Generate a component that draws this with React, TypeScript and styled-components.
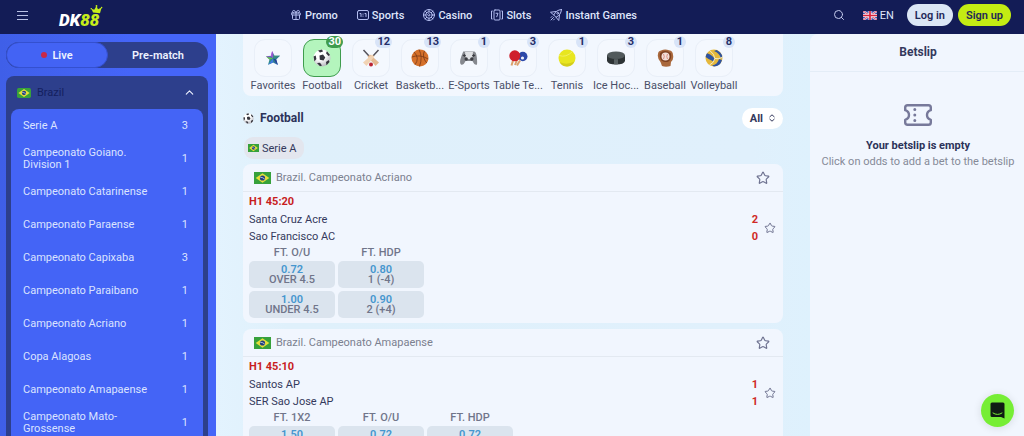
import React, { useState } from "react";
import styled, { createGlobalStyle, css } from "styled-components";
import { ChevronUp, Gift, Search, Star } from "lucide-react";

const GlobalStyle = createGlobalStyle`
  * {
    box-sizing: border-box;
  }

  body {
    margin: 0;
    font-family: Roboto, "Liberation Sans", sans-serif;
    font-size: 11px;
    color: #34395c;
    background: #e0f1fd;
  }

  button, select {
    font: inherit;
    color: inherit;
    border: 0;
    padding: 0;
    background: none;
    cursor: pointer;
  }

  a {
    color: inherit;
    text-decoration: none;
  }

  ul {
    list-style: none;
    margin: 0;
    padding: 0;
  }

  h1, h2, h3, p {
    margin: 0;
  }

  svg {
    display: block;
    flex: none;
  }
`;

const Page = styled.div`
  display: flex;
  flex-direction: column;
  height: 100vh;
  overflow: hidden;
`;

/* ---------- header ---------- */

const Header = styled.header`
  display: flex;
  align-items: center;
  flex: none;
  height: 34px;
  padding: 0 13px 4px 17px;
  background: #131c56;
  color: #dfe5fb;
`;

const HeaderLeft = styled.div`
  display: flex;
  align-items: center;
  gap: 31px;
  flex: none;
  width: 273px;
`;

const LogoLink = styled.a`
  position: relative;
  display: block;
  padding-top: 9px;
  font-size: 17px;
  line-height: 18px;
  font-weight: 900;
  font-style: italic;
  color: #fff;

  span {
    color: #c6ee1b;
  }

  svg {
    position: absolute;
    top: 3px;
    right: -4px;
  }
`;

const Nav = styled.nav`
  display: flex;
  align-items: center;
  gap: 19px;
  flex: 1;
`;

const NavLink = styled.a`
  display: flex;
  align-items: center;
  gap: 3px;
  font-size: 11px;
  font-weight: 500;
  white-space: nowrap;

  svg {
    color: #b3bdf0;
  }
`;

const HeaderRight = styled.div`
  display: flex;
  align-items: center;
  flex: none;
`;

const Language = styled.button`
  display: flex;
  align-items: center;
  gap: 3px;
  margin: 0 13px 0 18px;
  font-size: 11px;
`;

const PillButton = styled.button<{ $primary?: boolean }>`
  height: 22px;
  padding: 0 8px;
  margin-left: ${(p) => (p.$primary ? "5px" : "0")};
  border-radius: 11px;
  font-size: 11px;
  font-weight: 600;
  color: #1f2858;
  background: ${(p) => (p.$primary ? "#c3ec13" : "#dbe6f5")};
`;

/* ---------- layout ---------- */

const Columns = styled.div`
  display: grid;
  grid-template-columns: 216px minmax(0, 1fr) 214px;
  flex: 1;
  min-height: 0;
`;

/* ---------- sidebar ---------- */

const Sidebar = styled.aside`
  padding: 8px 8px 0 6px;
  overflow: hidden;
  background: linear-gradient(90deg, #3f5fe8, #4565f8 60%);
  color: #dbe3ff;
`;

const Tabs = styled.div`
  display: flex;
  height: 26px;
  border-radius: 13px;
  background: #2d3f8c;
`;

const Tab = styled.button<{ $active: boolean }>`
  display: flex;
  align-items: center;
  justify-content: center;
  gap: 5px;
  flex: 1;
  border-radius: 13px;
  font-size: 11px;
  font-weight: 600;
  color: #eef2ff;
  ${(p) =>
    p.$active &&
    css`
      background: #4363f4;
      border: 1px solid #3450cf;
    `}
`;

const LiveDot = styled.i`
  width: 6px;
  height: 6px;
  border-radius: 50%;
  background: #c92848;
`;

const Country = styled.section`
  margin-top: 8px;
  padding: 0 5px;
  border-radius: 8px 8px 0 0;
  background: #2d3f8c;
`;

const CountryHeader = styled.button`
  display: flex;
  align-items: center;
  gap: 6px;
  width: 100%;
  height: 33px;
  padding: 0 7px 0 6px;
  font-size: 11px;
  color: #14205f;

  svg:last-child {
    margin-left: auto;
    color: #eef2ff;
  }
`;

const LeagueList = styled.ul`
  border-radius: 8px 8px 0 0;
  background: #4464f6;
`;

const League = styled.a`
  display: flex;
  align-items: center;
  justify-content: space-between;
  height: 33px;
  padding: 0 15px 0 12px;
  font-size: 11px;
  line-height: 12px;

  span {
    max-width: 130px;
  }
`;

/* ---------- main column ---------- */

const Main = styled.main`
  padding: 0 27px;
  overflow: hidden;
  background: linear-gradient(90deg, #e3f3fe, #dff0fb 12%, #e0f0fc 90%, #def1fd);
`;

const SportsBar = styled.div`
  display: flex;
  gap: 1px;
  padding: 5px 6px 3px;
  border-radius: 0 0 8px 8px;
  background: #f2f7fe;
`;

const SportItem = styled.button`
  display: flex;
  flex-direction: column;
  align-items: center;
  width: 48px;
`;

const SportTile = styled.span<{ $active?: boolean }>`
  position: relative;
  display: flex;
  align-items: center;
  justify-content: center;
  width: 38px;
  height: 38px;
  border-radius: 11px;
  border: 1px solid ${(p) => (p.$active ? "#3f9c4e" : "#e9eff8")};
  background: ${(p) => (p.$active ? "#b4f5bd" : "#f4f8fe")};
`;

const Badge = styled.span<{ $active?: boolean }>`
  position: absolute;
  top: -4px;
  right: -3px;
  min-width: 12px;
  padding: 0 2px;
  border-radius: 6px;
  font-size: 11px;
  line-height: 12px;
  font-weight: 700;
  text-align: center;
  color: ${(p) => (p.$active ? "#fff" : "#262f68")};
  background: ${(p) => (p.$active ? "#3f9c4e" : "#d8e4f8")};
`;

const SportLabel = styled.span`
  margin-top: 2px;
  font-size: 11px;
  line-height: 14px;
  white-space: nowrap;
  color: #4a4f68;
`;

const SectionHead = styled.div`
  display: flex;
  align-items: center;
  gap: 6px;
  height: 22px;
  margin-top: 11px;

  h1 {
    flex: 1;
    font-size: 12px;
    font-weight: 700;
    color: #2c3259;
  }
`;

const FilterPill = styled.button`
  display: flex;
  align-items: center;
  gap: 6px;
  height: 21px;
  padding: 0 8px;
  border-radius: 11px;
  font-size: 11px;
  font-weight: 700;
  background: #fff;
`;

const Chip = styled.button`
  display: flex;
  align-items: center;
  gap: 3px;
  height: 22px;
  margin: 8px 0 5px 1px;
  padding: 0 7px 0 4px;
  border-radius: 9px;
  font-size: 11px;
  background: #e3e6ee;
`;

const Card = styled.article`
  margin-bottom: 6px;
  border-radius: 8px;
  background: #f1f6fe;
`;

const CardHeader = styled.div`
  display: flex;
  align-items: center;
  gap: 5px;
  height: 28px;
  padding: 0 13px 0 11px;
  border-bottom: 1px solid #e3e9f1;

  h2 {
    flex: 1;
    font-size: 11px;
    font-weight: 400;
    color: #7b808f;
  }
`;

const StarButton = styled.button`
  color: #6f7391;
`;

const CardBody = styled.div`
  padding: 1px 7px 5px 6px;
`;

const Clock = styled.p`
  font-size: 11px;
  line-height: 18px;
  font-weight: 700;
  color: #c81e1e;
`;

const Match = styled.div`
  display: flex;
  align-items: center;
  gap: 6px;
`;

const Teams = styled.div`
  flex: 1;
`;

const Team = styled.div`
  display: flex;
  justify-content: space-between;
  font-size: 11px;
  line-height: 17px;

  b {
    color: #cf2a26;
  }
`;

const Markets = styled.div`
  display: flex;
  gap: 3px;
`;

const Market = styled.div`
  display: flex;
  flex-direction: column;
  gap: 3px;
  width: 86px;

  h3 {
    margin-bottom: -3px;
    font-size: 11px;
    line-height: 16px;
    font-weight: 500;
    text-align: center;
    color: #70758a;
  }
`;

const OddButton = styled.button`
  display: flex;
  flex-direction: column;
  align-items: center;
  justify-content: center;
  height: 27px;
  padding-top: 1px;
  border-radius: 5px;
  font-size: 11px;
  line-height: 10px;
  font-weight: 500;
  color: #70758a;
  background: #dbe4ee;

  b {
    font-weight: 600;
    color: #4596cf;
  }
`;

/* ---------- betslip ---------- */

const Betslip = styled.aside`
  border-radius: 8px 0 0 0;
  background: #f1f6fe;
  text-align: center;

  h2 {
    padding-left: 2px;
    font-size: 12px;
    line-height: 37px;
    font-weight: 700;
    border-bottom: 1px solid #e4edf7;
  }
`;

const EmptyState = styled.div`
  display: flex;
  flex-direction: column;
  align-items: center;
  padding: 32px 0 0 2px;
  font-size: 11px;
  line-height: 16px;
  color: #858a98;

  strong {
    margin-top: 12px;
    font-size: 11px;
    font-weight: 700;
    color: #2c3259;
  }
`;

const ChatButton = styled.button`
  position: fixed;
  right: 10px;
  bottom: 9px;
  display: flex;
  align-items: center;
  justify-content: center;
  width: 33px;
  height: 33px;
  border-radius: 50%;
  background: #76ee35;
  box-shadow: 0 1px 8px rgba(0, 0, 0, 0.12);
`;

/* ---------- icons ---------- */

const BrazilFlag = ({ width = 14, height = 10, radius = 0 }) => (
  <svg width={width} height={height} viewBox="0 0 17 12" preserveAspectRatio="none">
    <rect width="17" height="12" rx={radius} fill="#37a13b" />
    <path d="M8.500 1.300 15.300 6 8.500 10.700 1.700 6Z" fill="#e6df3a" />
    <circle cx="8.500" cy="6" r="2.600" fill="#233f7c" />
    <path d="M6.200 5.200q2.500 0 4.500 1.900" stroke="#e8f0f0" strokeWidth=".7" fill="none" />
  </svg>
);

const UkFlag = () => (
  <svg width="14" height="9" viewBox="0 0 14 9">
    <rect width="14" height="9" fill="#3b4fa8" />
    <path d="M0 0 14 9M14 0 0 9" stroke="#f0e6f4" strokeWidth="2" />
    <path d="M0 0 14 9M14 0 0 9" stroke="#d8324a" strokeWidth=".8" />
    <path d="M7 0V9M0 4.500H14" stroke="#f6eef6" strokeWidth="3" />
    <path d="M7 0V9M0 4.500H14" stroke="#d8243c" strokeWidth="1.700" />
  </svg>
);

const Crown = () => (
  <svg width="14" height="9" viewBox="0 0 14 9">
    <path d="M4 7.500 2.500 3.800 5.200 4.800 7.500 1 9 4.200 12.600 2.600 11 8.300Z" fill="#c6ee1b" />
    <circle cx="7.500" cy="1" r=".9" fill="#c6ee1b" />
    <circle cx="2.300" cy="3.800" r=".8" fill="#c6ee1b" />
    <circle cx="12.600" cy="2.600" r=".8" fill="#c6ee1b" />
  </svg>
);

const MenuIcon = () => (
  <svg width="11" height="9" viewBox="0 0 11 9" stroke="#b8c0e4" strokeWidth="1">
    <path d="M0 .5H11M0 4.500H11M0 8.500H11" />
  </svg>
);

const SortIcon = () => (
  <svg width="6" height="8" viewBox="0 0 6 8" fill="none" stroke="currentColor" strokeLinecap="round" strokeLinejoin="round">
    <path d="M.8 2.800 3 .8 5.200 2.800M.8 5.200 3 7.200 5.200 5.200" />
  </svg>
);

const lineIcon = {
  width: 12,
  height: 12,
  viewBox: "0 0 24 24",
  fill: "none",
  stroke: "currentColor",
  strokeWidth: 2,
  strokeLinecap: "round",
  strokeLinejoin: "round",
} as const;

const ScoreIcon = () => (
  <svg {...lineIcon}>
    <rect x="1" y="3" width="22" height="18" rx="3" />
    <path d="M6 9h2v6M12 10v.5M12 14v.5M16 9h2v6" />
  </svg>
);

const ChipIcon = () => (
  <svg {...lineIcon}>
    <circle cx="12" cy="12" r="11" />
    <circle cx="12" cy="12" r="6.500" />
    <path d="M12 1v4.500M12 18.500V23M1 12h4.500M18.500 12H23M4.200 4.200l3.200 3.200M16.600 16.600l3.200 3.200M19.800 4.200l-3.200 3.200M7.400 16.600l-3.200 3.200M12 9.500l2.500 2.500-2.500 2.500L9.500 12Z" />
  </svg>
);

const SlotsIcon = () => (
  <svg {...lineIcon}>
    <rect x="6" y="2" width="12" height="20" rx="2" />
    <path d="M10 8.500h4l-2.500 7M2.500 4H1v16h1.500M21.500 4H23v16h-1.500" />
  </svg>
);

const RocketIcon = () => (
  <svg {...lineIcon}>
    <path d="M23 1C15 2 11 5 7.500 12l4.500 4.500C19 13 22 9 23 1ZM12 5 1 6.500 7.500 12M19 12l-1.500 11L12 16.500M7 17l-5 5M4 15l-2 2M9 20l-2 2" />
    <circle cx="15.500" cy="8.500" r="1.800" />
  </svg>
);

const TicketIcon = () => (
  <svg width="28" height="22" viewBox="0 0 28 22" fill="none" stroke="#77799a" strokeWidth="2.400" strokeLinejoin="round">
    <path d="M3.500 1.200H24.500Q26.800 1.200 26.800 3.500V6.200Q23 7.500 23 11T26.800 15.800V18.500Q26.800 20.800 24.500 20.800H3.500Q1.200 20.800 1.200 18.500V15.800Q5 14.500 5 11T1.200 6.200V3.500Q1.200 1.200 3.500 1.200Z" />
    <path d="M10.800 5.500V5.600M10.800 11V11.100M10.800 16.400V16.500" strokeWidth="3" strokeLinecap="round" />
  </svg>
);

const ChatIcon = () => (
  <svg width="15" height="17" viewBox="0 0 15 17">
    <path d="M2 .5H13Q14.500.5 14.500 2V16.500L11 15H2Q.5 15 .5 13.500V2Q.5.5 2 .5Z" fill="#101c14" />
    <path d="M3 11Q7.500 14 12 11" stroke="#76ee35" fill="none" strokeLinecap="round" />
  </svg>
);

const FavoriteArt = () => (
  <svg width="16" height="16" viewBox="0 0 18 18">
    <defs>
      <linearGradient id="fav" x1="0" y1="0" x2="1" y2="1">
        <stop offset="0" stopColor="#b44fd8" />
        <stop offset=".3" stopColor="#7d57c9" />
        <stop offset=".5" stopColor="#2f8f86" />
        <stop offset="1" stopColor="#2a4fb8" />
      </linearGradient>
    </defs>
    <path d="M8 1 10.800 6.500 17 6.600 12.600 10.700 14.500 17 9 14 3.500 16.500 5 10.800 1 7 6.800 6.600Z" fill="url(#fav)" />
    <path d="M8 1 9 9.500 6.800 6.600Z" fill="#b04fdc" />
    <path d="M1 7 9 9.500 5 10.800Z" fill="#64c14d" />
    <path d="M17 6.600 9 9.500 10.800 6.500Z" fill="#3f8f7d" />
    <path d="M3.500 16.500 9 9.500V14Z" fill="#3f7be0" />
    <path d="M14.500 17 9 9.500 12.600 10.700Z" fill="#263f96" />
  </svg>
);

const FootballArt = ({ size = 18 }) => (
  <svg width={size} height={size} viewBox="0 0 18 18">
    <defs>
      <radialGradient id="ball" cx=".4" cy=".3" r=".8">
        <stop offset=".4" stopColor="#fff" />
        <stop offset="1" stopColor="#a9a9b2" />
      </radialGradient>
    </defs>
    <circle cx="9" cy="9" r="8.500" fill="url(#ball)" />
    <path d="M6.500 6.500 10 5.600 12.300 8.400 10.500 11.600 6.800 10.800ZM5 1.500 9 .6 10 2.500 7 3.600ZM14 2.200 17 6 15.500 7 13 4.200ZM.6 7.500 2.700 6.600 3.400 10 1.400 12.500ZM4 14 7 13.700 9 16.500 7 17.300ZM13 13 15.700 11 16.500 13 13.500 16.200Z" fill="#35353d" />
  </svg>
);

const CricketArt = () => (
  <svg width="18" height="18" viewBox="0 0 18 18">
    <path d="M1.500 1 7 7M16.500 1 11 7" stroke="#55535c" strokeWidth="1.500" />
    <path d="M5.500 7.500 8 5.500 17 13.500 13.500 17Z" fill="#e3b992" />
    <path d="M12.500 7.500 10 5.500 1 13.500 4.500 17Z" fill="#f1d3b4" />
    <circle cx="9" cy="15.500" r="2" fill="#bb2432" />
  </svg>
);

const BasketballArt = () => (
  <svg width="18" height="18" viewBox="0 0 18 18">
    <circle cx="9" cy="9" r="8.500" fill="#d5702a" />
    <path d="M.8 8Q9 5 17.200 10M8 .5Q12 8 8.500 17.500M3 3Q9 9 4 15.800M13.500 1.800Q10.500 8 15.800 14" stroke="#7a3a18" strokeWidth=".8" fill="none" />
  </svg>
);

const GamepadArt = () => (
  <svg width="18" height="16" viewBox="0 0 18 16">
    <path d="M4 1.500H14Q16 1.500 16.700 6.500T17 14.500Q15 16 12.500 11H5.500Q3 16 1 14.500T1.300 6.500 4 1.500Z" fill="#85888e" />
    <path d="M5 2H13L12 9H6Z" fill="#dfe1e4" />
    <circle cx="6.200" cy="9" r="1.700" fill="#3c3d43" />
    <circle cx="11.800" cy="9" r="1.700" fill="#3c3d43" />
    <path d="M4.300 4V7M2.800 5.500H5.800M13.700 4V7M12.200 5.500H15.200" stroke="#3c3d43" />
  </svg>
);

const TableTennisArt = () => (
  <svg width="19" height="17" viewBox="0 0 19 17">
    <path d="M4.500 9 2.500 15.500M8 10 6 15" stroke="#dba06c" strokeWidth="2" />
    <circle cx="13.800" cy="6.500" r="4.700" fill="#2c48a8" />
    <path d="M11 10.500 8 15.500" stroke="#dba06c" strokeWidth="2" />
    <circle cx="5.800" cy="5.800" r="5.500" fill="#cf1f2c" />
    <circle cx="13.500" cy="8" r="1.600" fill="#eef0fa" />
  </svg>
);

const TennisArt = () => (
  <svg width="18" height="18" viewBox="0 0 18 18">
    <circle cx="9" cy="9" r="8.500" fill="#e8e620" />
    <path d="M1 6.500Q8 9 14.500 2.500" stroke="#f2f060" fill="none" />
    <path d="M1.500 13Q9 16.500 16.500 12.500 14 17.500 9 17.500T1.500 13Z" fill="#d3cd1c" />
  </svg>
);

const PuckArt = () => (
  <svg width="18" height="14" viewBox="0 0 18 14">
    <path d="M0 4V10Q1 13.500 9 13.500T18 10V4Z" fill="#2d3335" />
    <ellipse cx="9" cy="4.200" rx="9" ry="3.800" fill="#51595b" />
    <path d="M7 8.200H11V13.300H7Z" fill="#596163" />
  </svg>
);

const BaseballArt = () => (
  <svg width="17" height="18" viewBox="0 0 17 18">
    <path d="M1 5Q1 2 4 1.500 8-.5 12 1.300 16 2 16 6 17 10 14 13L13.500 17Q9 18.500 5 17L3.500 13Q0 9 1 5Z" fill="#a9683c" />
    <path d="M3 4Q8 0 14 4.500 15 10 11.500 12.500 8 14 4.500 11.500 2 8 3 4Z" fill="#7d4020" />
    <circle cx="8.500" cy="7.500" r="4" fill="#f3dfd8" />
    <path d="M6.500 5Q8 7.500 6.500 10M10.500 5Q9 7.500 10.500 10" stroke="#cf6e62" strokeWidth=".7" fill="none" />
  </svg>
);

const VolleyballArt = () => (
  <svg width="18" height="18" viewBox="0 0 18 18">
    <circle cx="9" cy="9" r="8.500" fill="#e5b83c" />
    <path d="M2 4.200Q6 5 9.500 9.500L8.500 12.500Q3 10 .6 8 1 6 2 4.200Z" fill="#2f53a0" />
    <path d="M11.500 1Q16 3 17.300 7L16 9.500Q14.500 4 9 2Z" fill="#2f53a0" />
    <path d="M17 11Q15.500 17 9 17.500L7 16.500Q12.500 15.500 14 10Z" fill="#2f53a0" />
    <path d="M5 1.800Q9.500 5 9.800 9.500 13 10.500 17 8.500M9.800 9.500Q9 14 4.500 16" stroke="#f3eed8" strokeWidth=".9" fill="none" />
  </svg>
);

/* ---------- data ---------- */

const NAV_ITEMS = [
  { label: "Promo", icon: <Gift size={12} /> },
  { label: "Sports", icon: <ScoreIcon /> },
  { label: "Casino", icon: <ChipIcon /> },
  { label: "Slots", icon: <SlotsIcon /> },
  { label: "Instant Games", icon: <RocketIcon /> },
];

const LEAGUES = [
  { name: "Serie A", count: 3 },
  { name: "Campeonato Goiano. Division 1", count: 1 },
  { name: "Campeonato Catarinense", count: 1 },
  { name: "Campeonato Paraense", count: 1 },
  { name: "Campeonato Capixaba", count: 3 },
  { name: "Campeonato Paraibano", count: 1 },
  { name: "Campeonato Acriano", count: 1 },
  { name: "Copa Alagoas", count: 1 },
  { name: "Campeonato Amapaense", count: 1 },
  { name: "Campeonato Mato-Grossense", count: 1 },
];

const SPORTS = [
  { label: "Favorites", art: <FavoriteArt /> },
  { label: "Football", count: 30, art: <FootballArt /> },
  { label: "Cricket", count: 12, art: <CricketArt /> },
  { label: "Basketb...", count: 13, art: <BasketballArt /> },
  { label: "E-Sports", count: 1, art: <GamepadArt /> },
  { label: "Table Te...", count: 3, art: <TableTennisArt /> },
  { label: "Tennis", count: 1, art: <TennisArt /> },
  { label: "Ice Hoc...", count: 3, art: <PuckArt /> },
  { label: "Baseball", count: 1, art: <BaseballArt /> },
  { label: "Volleyball", count: 8, art: <VolleyballArt /> },
];

const MATCHES = [
  {
    league: "Brazil. Campeonato Acriano",
    clock: "H1 45:20",
    teams: [
      { name: "Santa Cruz Acre", score: 2 },
      { name: "Sao Francisco AC", score: 0 },
    ],
    markets: [
      { title: "FT. O/U", odds: [["0.72", "OVER 4.5"], ["1.00", "UNDER 4.5"]] },
      { title: "FT. HDP", odds: [["0.80", "1 (-4)"], ["0.90", "2 (+4)"]] },
    ],
  },
  {
    league: "Brazil. Campeonato Amapaense",
    clock: "H1 45:10",
    teams: [
      { name: "Santos AP", score: 1 },
      { name: "SER Sao Jose AP", score: 1 },
    ],
    markets: [
      { title: "FT. 1X2", odds: [["1.50", ""]] },
      { title: "FT. O/U", odds: [["0.72", ""]] },
      { title: "FT. HDP", odds: [["0.72", ""]] },
    ],
  },
];

const App = () => {
  const [tab, setTab] = useState("live");
  const [open, setOpen] = useState(true);
  const [sport, setSport] = useState("Football");

  return (
    <Page>
      <GlobalStyle />
      <Header>
        <HeaderLeft>
          <button aria-label="Menu">
            <MenuIcon />
          </button>
          <LogoLink href="#">
            DK<span>88</span>
            <Crown />
          </LogoLink>
        </HeaderLeft>
        <Nav>
          {NAV_ITEMS.map((item) => (
            <NavLink href="#" key={item.label}>
              {item.icon}
              {item.label}
            </NavLink>
          ))}
        </Nav>
        <HeaderRight>
          <button aria-label="Search">
            <Search size={12} color="#c3caec" />
          </button>
          <Language>
            <UkFlag />
            EN
          </Language>
          <PillButton>Log in</PillButton>
          <PillButton $primary>Sign up</PillButton>
        </HeaderRight>
      </Header>

      <Columns>
        <Sidebar>
          <Tabs>
            <Tab $active={tab === "live"} onClick={() => setTab("live")}>
              <LiveDot />
              Live
            </Tab>
            <Tab $active={tab === "pre"} onClick={() => setTab("pre")}>
              Pre-match
            </Tab>
          </Tabs>
          <Country>
            <CountryHeader onClick={() => setOpen(!open)}>
              <BrazilFlag radius={2} />
              Brazil
              <ChevronUp size={13} />
            </CountryHeader>
            {open && (
              <LeagueList>
                {LEAGUES.map((l) => (
                  <li key={l.name}>
                    <League href="#">
                      <span>{l.name}</span>
                      {l.count}
                    </League>
                  </li>
                ))}
              </LeagueList>
            )}
          </Country>
        </Sidebar>

        <Main>
          <SportsBar>
            {SPORTS.map((s) => (
              <SportItem key={s.label} onClick={() => setSport(s.label)}>
                <SportTile $active={s.label === sport}>
                  {s.art}
                  {s.count && <Badge $active={s.label === sport}>{s.count}</Badge>}
                </SportTile>
                <SportLabel>{s.label}</SportLabel>
              </SportItem>
            ))}
          </SportsBar>

          <SectionHead>
            <FootballArt size={11} />
            <h1>Football</h1>
            <FilterPill>
              All
              <SortIcon />
            </FilterPill>
          </SectionHead>
          <Chip>
            <BrazilFlag width={11} height={8} />
            Serie A
          </Chip>

          {MATCHES.map((m) => (
            <Card key={m.league}>
              <CardHeader>
                <BrazilFlag width={17} height={12} />
                <h2>{m.league}</h2>
                <StarButton aria-label="Add league to favorites">
                  <Star size={14} />
                </StarButton>
              </CardHeader>
              <CardBody>
                <Clock>{m.clock}</Clock>
                <Match>
                  <Teams>
                    {m.teams.map((t) => (
                      <Team key={t.name}>
                        {t.name}
                        <b>{t.score}</b>
                      </Team>
                    ))}
                  </Teams>
                  <StarButton aria-label="Add match to favorites">
                    <Star size={12} />
                  </StarButton>
                </Match>
                <Markets>
                  {m.markets.map((market) => (
                    <Market key={market.title}>
                      <h3>{market.title}</h3>
                      {market.odds.map(([price, name]) => (
                        <OddButton key={price}>
                          <b>{price}</b>
                          {name || <br />}
                        </OddButton>
                      ))}
                    </Market>
                  ))}
                </Markets>
              </CardBody>
            </Card>
          ))}
        </Main>

        <Betslip>
          <h2>Betslip</h2>
          <EmptyState>
            <TicketIcon />
            <strong>Your betslip is empty</strong>
            <p>Click on odds to add a bet to the betslip</p>
          </EmptyState>
        </Betslip>
      </Columns>

      <ChatButton aria-label="Open chat">
        <ChatIcon />
      </ChatButton>
    </Page>
  );
};

export default App;
